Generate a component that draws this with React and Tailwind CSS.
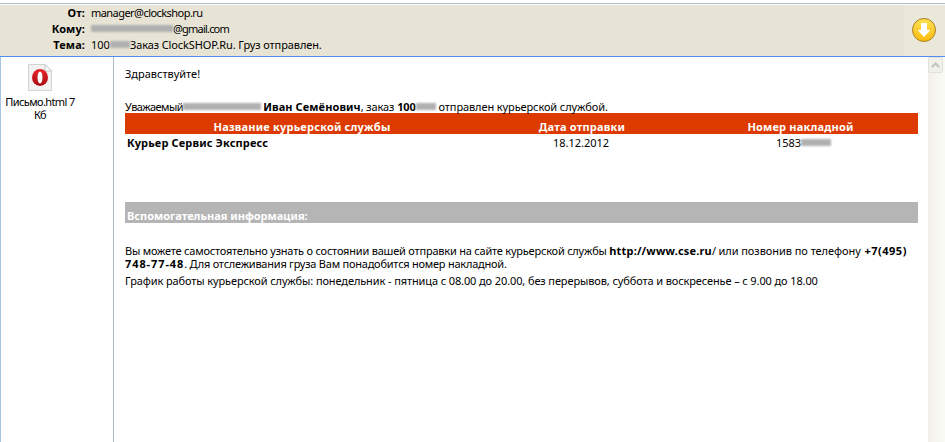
function Smudge({ width }) {
  return <span style={{ width }} className="inline-block h-[7px] shrink-0 bg-[#b0b0b0] blur-[1px] align-middle" />;
}

function HeaderRow({ label, children }) {
  return (
    <div className="flex h-4 items-center">
      <div className="w-[85px] shrink-0 text-right font-bold tracking-[0.1px]">{label}</div>
      <div className="flex items-center whitespace-pre pl-[6px]">{children}</div>
    </div>
  );
}

function OperaFile() {
  return (
    <svg width="24" height="27" viewBox="0 0 24 27">
      <defs>
        <linearGradient id="red" x1="0" y1="0" x2="0" y2="1">
          <stop offset="0" stopColor="#e8262a" />
          <stop offset="1" stopColor="#a80c12" />
        </linearGradient>
      </defs>
      <path d="M.5 .5H17L23.500 7V26.500H.5Z" fill="#f2f2f2" stroke="#d2d2d2" />
      <path d="M17 .5V7H23.500Z" fill="#fff" stroke="#c4c4c4" />
      <ellipse cx="12" cy="13.500" rx="8" ry="8.500" fill="url(#red)" />
      <ellipse cx="12" cy="13.500" rx="2.500" ry="6" fill="#fff" />
    </svg>
  );
}

function ScrollTrack() {
  return (
    <div className="flex w-[17px] shrink-0 flex-col bg-gradient-to-r from-[#f1efe8] to-[#fbfbf6]">
      <div className="flex h-[16px] w-[15px] items-center justify-center rounded-[2px] border border-[#e2e2da] bg-[#f0f0ea]">
        <svg width="9" height="6" viewBox="0 0 9 6">
          <path d="M1 5L4.500 1.500L8 5" fill="none" stroke="#c4c4bc" strokeWidth="2" />
        </svg>
      </div>
    </div>
  );
}

export default function App() {
  return (
    <div className="flex h-[442px] w-[945px] flex-col overflow-hidden bg-white text-[11px] leading-[13px] text-black [font-family:'Noto_Sans',sans-serif]">
      {/* Header */}
      <div className="mt-[3px] h-px bg-[#a9bcc8]" />
      <div className="mt-px flex h-[52px] items-center justify-between border-b border-[#4d90f0] bg-[#e8e4d5]">
        <div className="flex flex-col pb-[4px]">
          <HeaderRow label="От:"><span className="tracking-[-0.55px]">manager@clockshop.ru</span></HeaderRow>
          <HeaderRow label="Кому:">
            <Smudge width={82} /><span className="tracking-[-0.8px]">@gmail.com</span>
          </HeaderRow>
          <HeaderRow label="Тема:">
            100<Smudge width={20} /><span className="tracking-[-0.1px]">Заказ ClockSHOP.Ru. Груз отправлен.</span>
          </HeaderRow>
        </div>
        <div className="flex h-full w-[41px] items-center justify-center bg-[#ebe8da] pb-[2px] pr-[1px]">
          <div className="flex h-6 w-6 items-center justify-center rounded-full border border-[#a87c20] bg-gradient-to-b from-[#ffe14d] to-[#fdbb00]">
            <svg width="14" height="16" viewBox="0 0 14 16">
              <path d="M4 1H10V8H13.500L7 15L.5 8H4Z" fill="#fff" />
            </svg>
          </div>
        </div>
      </div>

      {/* Body */}
      <div className="flex min-h-0 flex-1">
        <div className="flex w-[114px] shrink-0 flex-col items-start border-x border-l-[#a9c4e0] border-r-[#a9bcc8]">
          <div className="flex w-[78px] flex-col items-center pt-[7px] text-center">
            <OperaFile />
            <div className="mt-[4px] tracking-[-0.6px]">Письмо.html 7<br />Кб</div>
          </div>
        </div>

        <div className="min-w-0 flex-1 pl-[11px] pr-[10px] pt-[10px]">
          <p>Здравствуйте!</p>
          <p className="mt-[20px] flex h-[13px] items-center whitespace-pre tracking-[-0.1px]">
            <span className="tracking-[-0.5px]">Уважаемый</span><Smudge width={78} /><b className="ml-[2px] tracking-[0.1px]">Иван Семёнович</b><span>, заказ </span><b>100</b><Smudge width={20} /> отправлен курьерской службой.
          </p>

          <div className="grid h-[21px] grid-cols-[354px_204px_1fr] items-center bg-[#dd3a00] pt-[5px] text-center font-bold tracking-[0.2px] text-white">
            <div>Название курьерской службы</div>
            <div className="pl-[2px]">Дата отправки</div>
            <div>Номер накладной</div>
          </div>
          <div className="grid h-[18px] grid-cols-[354px_204px_1fr] items-center pb-px text-center">
            <div className="pl-[2px] text-left font-bold tracking-[0.14px]">Курьер Сервис Экспресс</div>
            <div>18.12.2012</div>
            <div className="flex items-center justify-center pl-[6px]">1583<Smudge width={30} /></div>
          </div>

          <div className="mt-[50px] flex h-[21px] items-center bg-[#b5b5b5] pl-[2px] pt-[5px] font-bold text-white">
            Вспомогательная информация:
          </div>

          <p className="mt-[21px] w-[793px] tracking-[-0.21px]">
            Вы можете самостоятельно узнать о состоянии вашей отправки на сайте курьерской службы <b className="tracking-[0.17px]">http://www.cse.ru</b>/ <span className="tracking-[-0.05px]">или позвонив по телефону</span>{' '}<b className="ml-[1px] tracking-[0.5px]">+7(495)</b> <b className="tracking-[0.9px]">748-77-48</b>. <span className="tracking-[-0.23px]">Для отслеживания груза Вам понадобится номер накладной.</span>
          </p>
          <p className="mt-[4px] tracking-[-0.11px]">
            График работы курьерской службы: понедельник - пятница с 08.00 до 20.00, без перерывов, суббота и воскресенье – с 9.00 до 18.00
          </p>
        </div>

        <ScrollTrack />
      </div>
    </div>
  );
}
